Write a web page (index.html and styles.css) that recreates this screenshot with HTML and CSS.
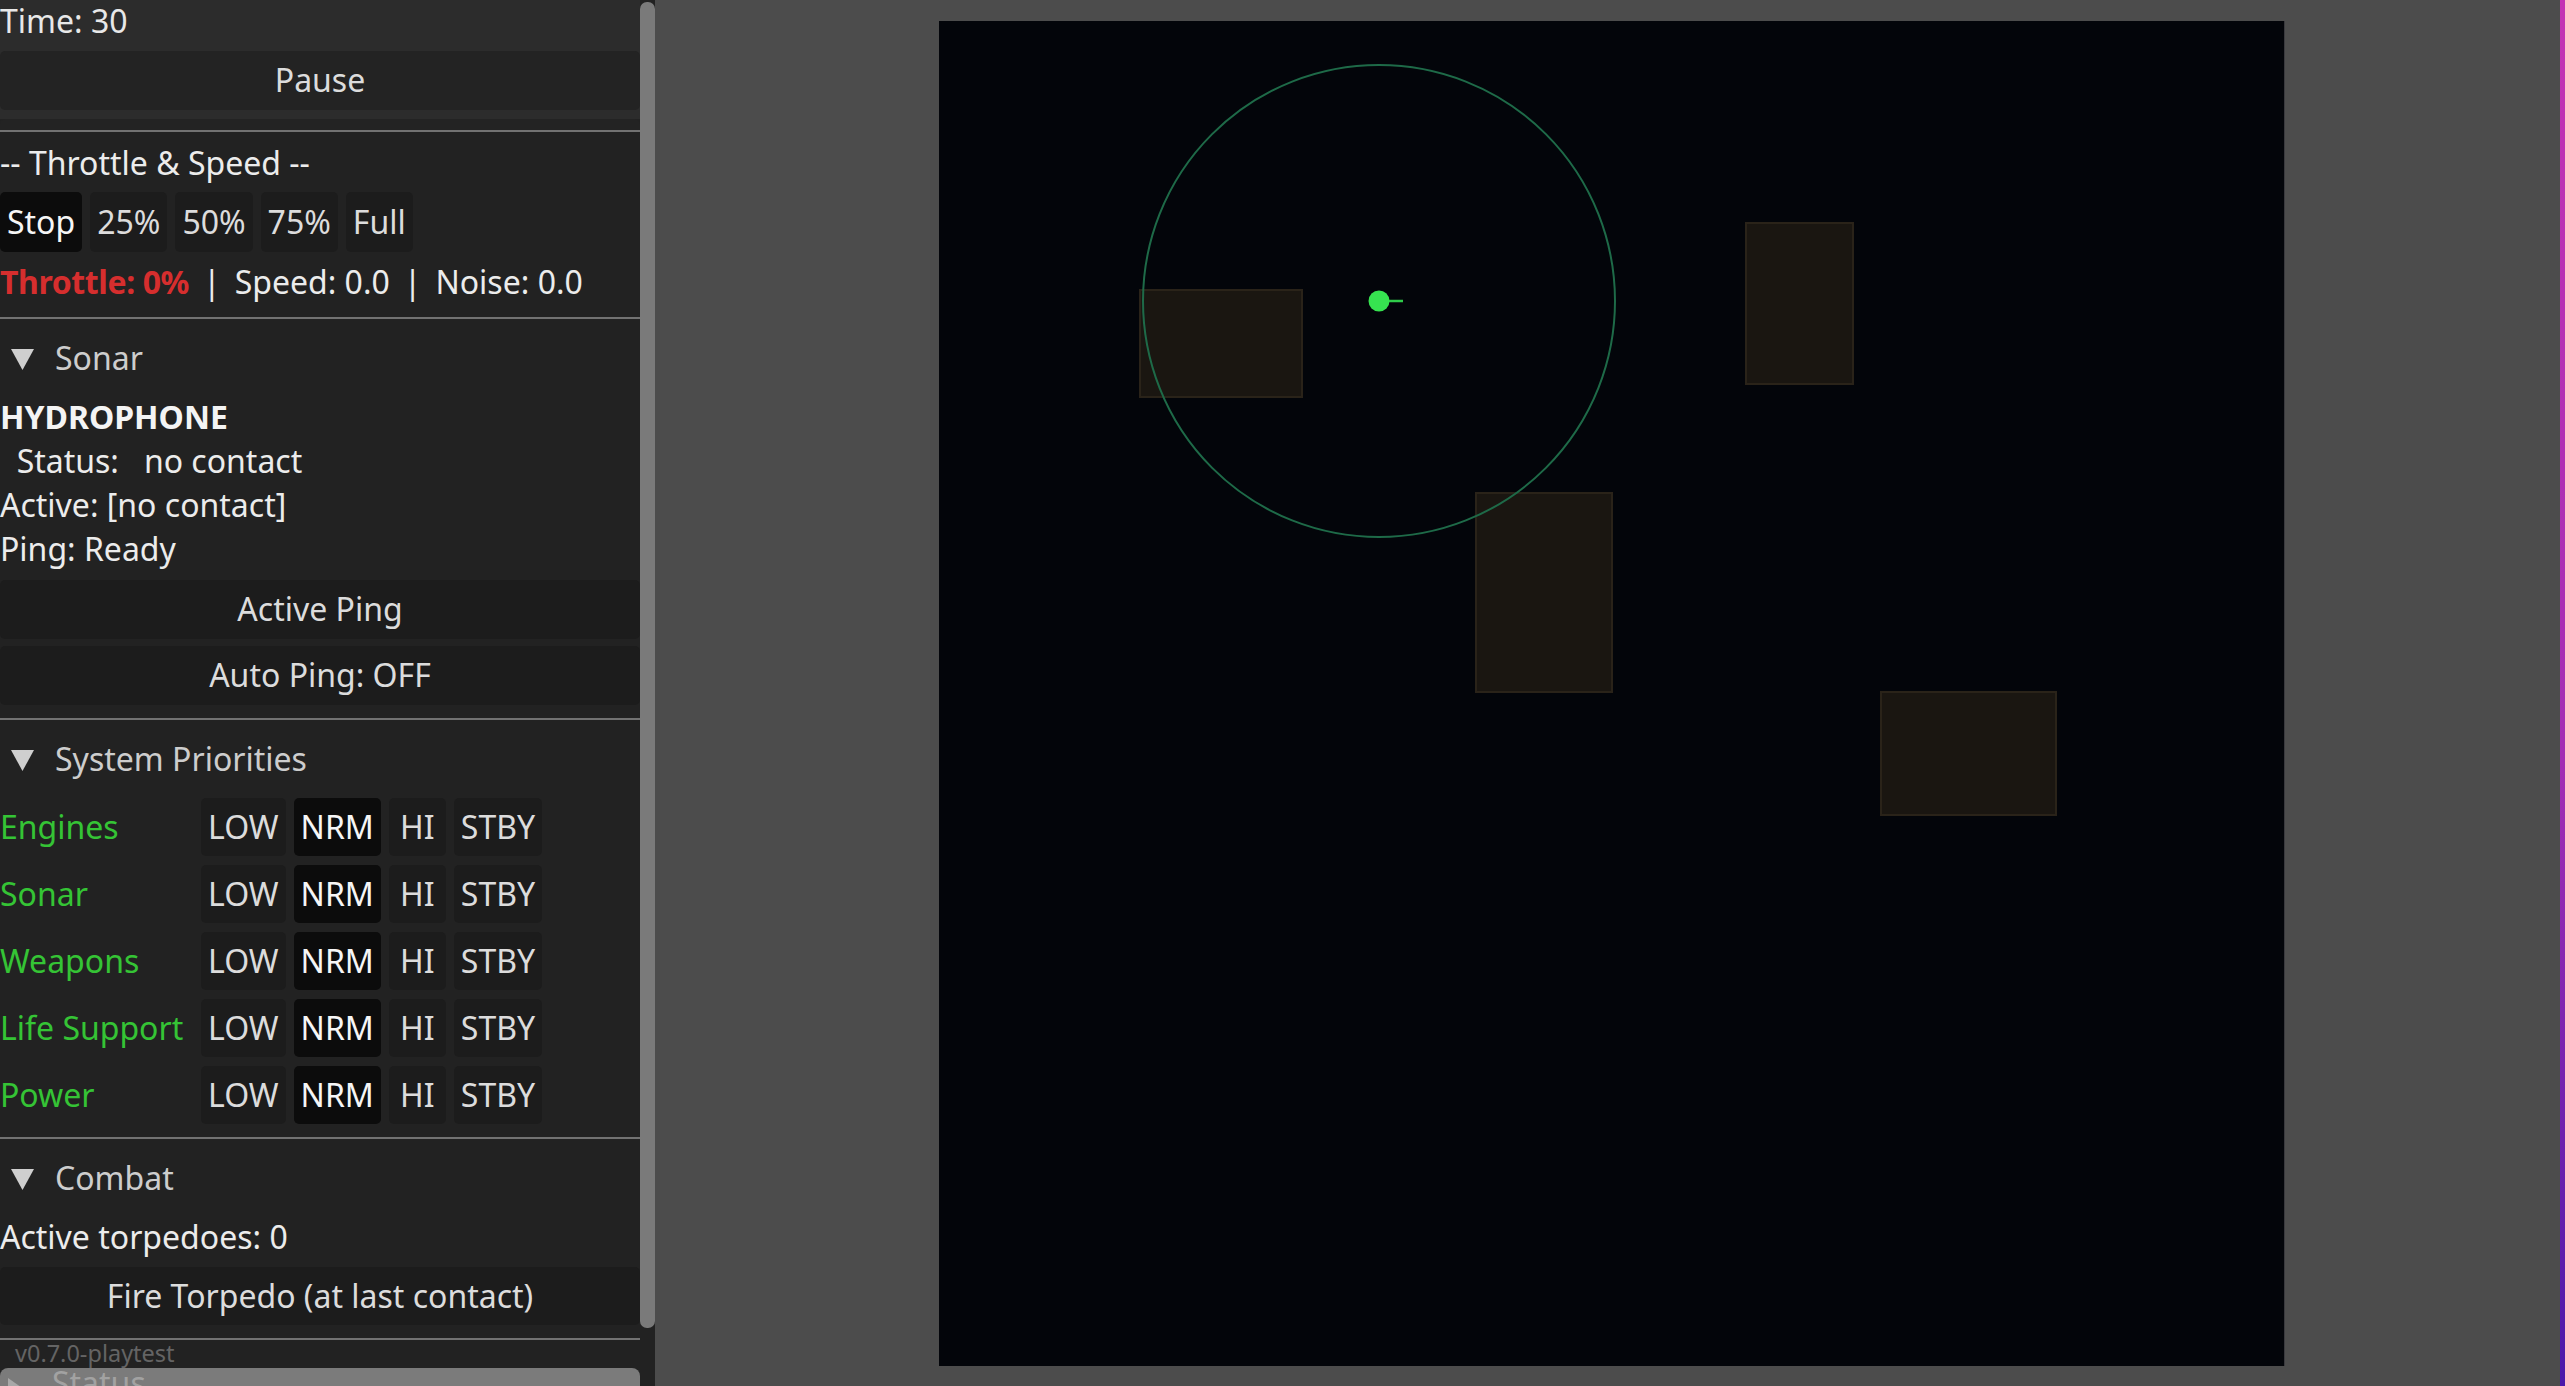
FILE: index.html
```html
<!DOCTYPE html>
<html lang="en">
<head>
<meta charset="utf-8">
<title>Sub Command</title>
<link rel="stylesheet" href="styles.css">
</head>
<body>
<div class="app">
  <aside class="panel">
    <div class="content">
      <div class="top">
        <div class="time">Time: 30</div>
        <button class="btn btn-wide btn-pause">Pause</button>
      </div>
      <div class="strip"></div>
      <div class="sep"></div>

      <div class="line title-line">-- Throttle &amp; Speed --</div>
      <div class="btn-row throttle-row">
        <button class="btn btn-on">Stop</button>
        <button class="btn">25%</button>
        <button class="btn">50%</button>
        <button class="btn">75%</button>
        <button class="btn">Full</button>
      </div>
      <div class="line status-row">
        <span class="warn">Throttle: 0%</span>
        <span>|</span>
        <span>Speed: 0.0</span>
        <span>|</span>
        <span>Noise: 0.0</span>
      </div>
      <div class="sep sep-gap"></div>

      <div class="section-head">
        <svg class="tri" viewBox="0 0 23 21" width="23" height="21"><polygon points="0,0 23,0 11.5,21" fill="#cfcfcf"/></svg>
        <span>Sonar</span>
      </div>
      <div class="line strong first-after-head">HYDROPHONE</div>
      <div class="line">  Status:   no contact</div>
      <div class="line">Active: [no contact]</div>
      <div class="line">Ping: Ready</div>
      <button class="btn btn-wide btn-block first-btn">Active Ping</button>
      <button class="btn btn-wide btn-block next-btn">Auto Ping: OFF</button>
      <div class="sep sep-gap"></div>

      <div class="section-head">
        <svg class="tri" viewBox="0 0 23 21" width="23" height="21"><polygon points="0,0 23,0 11.5,21" fill="#cfcfcf"/></svg>
        <span>System Priorities</span>
      </div>
      <div class="prio-list">
        <div class="prio-row">
          <span class="sys">Engines</span>
          <button class="btn">LOW</button><button class="btn btn-on">NRM</button><button class="btn">HI</button><button class="btn">STBY</button>
        </div>
        <div class="prio-row">
          <span class="sys">Sonar</span>
          <button class="btn">LOW</button><button class="btn btn-on">NRM</button><button class="btn">HI</button><button class="btn">STBY</button>
        </div>
        <div class="prio-row">
          <span class="sys">Weapons</span>
          <button class="btn">LOW</button><button class="btn btn-on">NRM</button><button class="btn">HI</button><button class="btn">STBY</button>
        </div>
        <div class="prio-row">
          <span class="sys">Life Support</span>
          <button class="btn">LOW</button><button class="btn btn-on">NRM</button><button class="btn">HI</button><button class="btn">STBY</button>
        </div>
        <div class="prio-row">
          <span class="sys">Power</span>
          <button class="btn">LOW</button><button class="btn btn-on">NRM</button><button class="btn">HI</button><button class="btn">STBY</button>
        </div>
      </div>
      <div class="sep sep-gap"></div>

      <div class="section-head">
        <svg class="tri" viewBox="0 0 23 21" width="23" height="21"><polygon points="0,0 23,0 11.5,21" fill="#cfcfcf"/></svg>
        <span>Combat</span>
      </div>
      <div class="line first-after-head">Active torpedoes: 0</div>
      <button class="btn btn-wide btn-block fire-btn">Fire Torpedo (at last contact)</button>
      <div class="sep sep-gap"></div>

      <div class="status-bar">
        <svg class="tri-r" viewBox="0 0 15 21" width="15" height="21"><polygon points="0,0 15,10.5 0,21" fill="#a8a8a8"/></svg>
        <span>Status</span>
      </div>
    </div>
    <div class="scrollbar"><div class="grabber"></div></div>
    <div class="version">v0.7.0-playtest</div>
  </aside>

  <main class="view">
    <div class="canvas">
      <svg viewBox="0 0 1345 1345" width="1345" height="1345">
        <g fill="#1a1611" stroke="#2a2319" stroke-width="2">
          <rect x="201" y="269" width="162" height="107"/>
          <rect x="807" y="202" width="107" height="161"/>
          <rect x="537" y="472" width="136" height="199"/>
          <rect x="942" y="671" width="175" height="123"/>
        </g>
        <circle cx="440" cy="280" r="236" fill="none" stroke="#1e6a48" stroke-width="2"/>
        <line x1="449" y1="280" x2="464" y2="280" stroke="#2fcc4a" stroke-width="2.5"/>
        <circle cx="440" cy="280" r="10.5" fill="#36e350"/>
      </svg>
    </div>
  </main>
  <div class="edge"></div>
</div>
</body>
</html>
```

FILE: styles.css
```css
html, body {
  margin: 0;
  padding: 0;
  height: 100%;
}

body {
  background: #4c4c4c;
  font-family: "Noto Sans", "Open Sans", sans-serif;
  font-weight: 400;
  overflow: hidden;
}

.app {
  display: flex;
  width: 2565px;
  height: 1386px;
}

/* ---------- side panel ---------- */
.panel {
  position: relative;
  flex: none;
  width: 655px;
  height: 1386px;
  display: flex;
  background: #222222;
  overflow: hidden;
}

.content {
  width: 640px;
  flex: none;
  display: flex;
  flex-direction: column;
}

.content > * {
  flex-shrink: 0;
}

.top {
  background: #2c2c2c;
  height: 119px;
  display: flex;
  flex-direction: column;
}

.time {
  font-size: 32px;
  line-height: 42px;
  color: #e8e8e8;
}

.strip {
  height: 11px;
  background: #232323;
  border-radius: 5px 5px 0 0;
}

.sep {
  height: 2px;
  background: #727272;
}

.sep-gap {
  margin-top: 13px;
}

.line {
  font-size: 32px;
  line-height: 44px;
  color: #ececec;
  white-space: pre;
}

.strong {
  font-weight: 700;
  color: #f4f4f4;
}

.title-line {
  margin-top: 9px;
}

.btn {
  font-family: inherit;
  font-weight: 400;
  font-size: 32px;
  line-height: 44px;
  color: #dcdcdc;
  background: #1c1c1c;
  border: none;
  border-radius: 5px;
  padding: 7px;
  min-width: 57px;
  margin: 0;
  flex: none;
}

.btn-on {
  background: #0c0c0c;
  color: #f6f6f6;
}

.btn-wide {
  display: block;
  width: 100%;
  text-align: center;
}

.btn-pause {
  margin-top: 9px;
  background: #232323;
  padding: 7px 8px 8px;
}

.btn-block {
  padding: 7px 8px 8px;
}

.first-btn {
  margin-top: 9px;
}

.next-btn {
  margin-top: 7px;
}

.fire-btn {
  margin-top: 8px;
  padding: 7px 8px;
}

.btn-row {
  display: flex;
  gap: 8px;
}

.throttle-row {
  margin-top: 7px;
}

.throttle-row .btn {
  padding: 8px 7px;
}

.status-row {
  margin-top: 8px;
  display: flex;
  gap: 14px;
}

.warn {
  color: #d62e2e;
  font-weight: 700;
  letter-spacing: -0.4px;
}

/* collapsible section headers */
.section-head {
  margin-top: 17px;
  display: flex;
  align-items: center;
  gap: 21px;
  padding-left: 11px;
  font-size: 32px;
  line-height: 44px;
  color: #cdcdcd;
}

.tri {
  display: block;
  margin-top: 2px;
}

.first-after-head {
  margin-top: 15px;
}

/* system priorities */
.prio-list {
  margin-top: 17px;
  display: flex;
  flex-direction: column;
  gap: 9px;
}

.prio-row {
  display: flex;
  align-items: center;
  gap: 8px;
}

.sys {
  width: 193px;
  flex: none;
  font-size: 32px;
  line-height: 44px;
  color: #35c435;
}

/* folded status header, clipped at the bottom */
.status-bar {
  margin-top: 28px;
  height: 50px;
  background: #7b7b7b;
  border-radius: 8px 8px 0 0;
  display: flex;
  align-items: flex-start;
  gap: 29px;
  padding-left: 8px;
  font-size: 32px;
  line-height: 30px;
  color: #a2a2a2;
}

.tri-r {
  display: block;
  margin-top: 10px;
}

.scrollbar {
  width: 15px;
  flex: none;
  padding-top: 2px;
}

.grabber {
  height: 1326px;
  background: #7a7a7a;
  border-radius: 7px;
}

.version {
  position: absolute;
  left: 15px;
  top: 1339px;
  font-size: 23.5px;
  line-height: 28px;
  color: #646464;
}

/* ---------- game view ---------- */
.view {
  flex: 1;
  display: flex;
  align-items: center;
  justify-content: center;
  padding-left: 8px;
  background: #4c4c4c;
  border-bottom-right-radius: 8px;
}

.canvas {
  width: 1345px;
  height: 1345px;
  background: #03050a;
  box-shadow: 1px 0 0 #3a3a3e;
}

.canvas svg {
  display: block;
}

.edge {
  width: 5px;
  flex: none;
  background: linear-gradient(#c331b4, #a22cb4 55%, #4a18aa);
}
```
